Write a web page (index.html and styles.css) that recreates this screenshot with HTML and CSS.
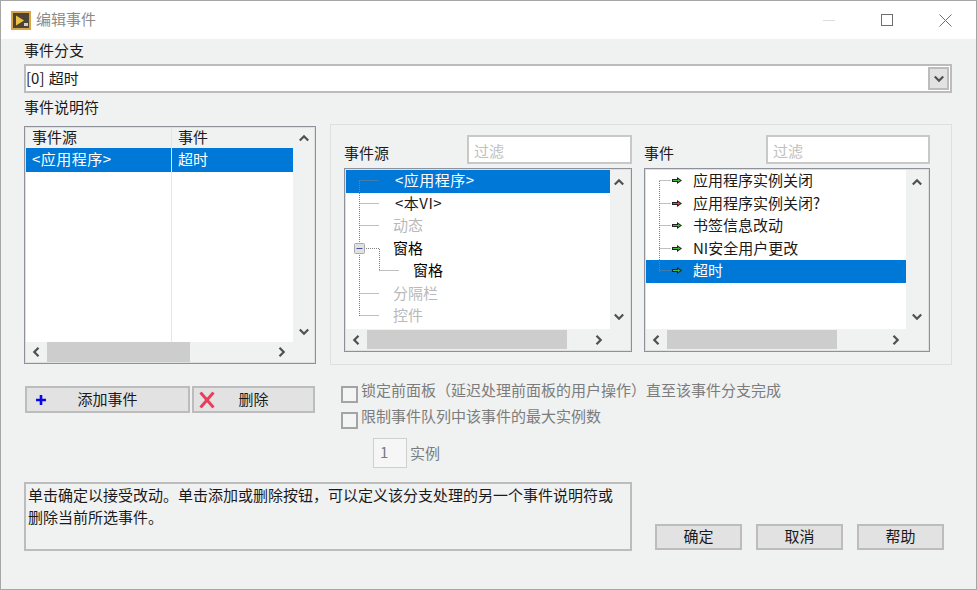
FILE: index.html
```html
<!DOCTYPE html>
<html lang="zh-CN">
<head>
<meta charset="utf-8">
<title>编辑事件</title>
<link rel="stylesheet" href="styles.css">
</head>
<body>
<svg class="defs" width="0" height="0" aria-hidden="true">
  <symbol id="up" viewBox="0 0 10 8"><path d="M.8 6.500 5 2.300l4.200 4.200" fill="none" stroke="#505050" stroke-width="2.200"/></symbol>
  <symbol id="down" viewBox="0 0 10 8"><path d="M.8 1.500 5 5.700l4.200-4.200" fill="none" stroke="#505050" stroke-width="2.200"/></symbol>
  <symbol id="left" viewBox="0 0 8 10"><path d="M6.500.8 2.300 5l4.200 4.200" fill="none" stroke="#505050" stroke-width="2.200"/></symbol>
  <symbol id="right" viewBox="0 0 8 10"><path d="M1.500.8 5.700 5 1.500 9.200" fill="none" stroke="#505050" stroke-width="2.200"/></symbol>
  <symbol id="arrow-green" viewBox="0 0 10 7"><path d="M0 2h5V0l5 3.500L5 7V5H0z" fill="#222"/><path d="M1 3h5V2l2.500 1.500L6 5V4H1z" fill="#3fbf3f"/></symbol>
  <symbol id="arrow-red" viewBox="0 0 10 7"><path d="M0 2h5V0l5 3.500L5 7V5H0z" fill="#222"/><path d="M1 3h5V2l2.500 1.500L6 5V4H1z" fill="#e0483a"/></symbol>
</svg>
<div class="window">
  <header class="titlebar">
    <svg class="app-icon" width="20" height="19" viewBox="0 0 20 19">
      <rect width="20" height="19" fill="#d9a441"/>
      <rect x="2" y="2" width="16" height="15" fill="#4a4436"/>
      <path d="M5 4.500 13 9.500 5 14.500z" fill="#efc243"/>
      <rect x="13" y="12" width="4" height="3" fill="#cfcfcf"/>
    </svg>
    <span class="title-text">编辑事件</span>
    <div class="win-controls">
      <span class="win-min"></span>
      <span class="win-max"></span>
      <svg class="win-close" width="13" height="13" viewBox="0 0 13 13"><path d="M.5.5l12 12M12.500.5l-12 12" stroke="#6e6e6e" fill="none"/></svg>
    </div>
  </header>

  <main class="content">
    <div class="label label-branch">事件分支</div>
    <div class="combo">
      <span class="combo-value">[0] 超时</span>
      <span class="combo-btn"><svg width="12" height="8"><use href="#down"/></svg></span>
    </div>
    <div class="label label-spec">事件说明符</div>

    <div class="row-top">
      <section class="spec-list">
        <div class="spec-body">
          <div class="spec-table">
            <div class="spec-head"><span class="cell-a">事件源</span><span class="cell-b">事件</span></div>
            <div class="spec-row"><span class="cell-a wide">&lt;应用程序&gt;</span><span class="cell-b">超时</span></div>
            <div class="spec-fill"><span class="fill-a"></span></div>
          </div>
          <div class="vbar vbar-spec">
            <svg width="10" height="8"><use href="#up"/></svg>
            <svg width="10" height="8"><use href="#down"/></svg>
          </div>
        </div>
        <div class="hbar">
          <svg class="h-arrow" width="8" height="10"><use href="#left"/></svg>
          <span class="thumb thumb-spec"></span>
          <svg class="h-arrow h-arrow-end" width="8" height="10"><use href="#right"/></svg>
        </div>
      </section>

      <section class="panel">
        <div class="picker picker-source">
          <div class="picker-head">
            <span class="label picker-label">事件源</span>
            <span class="filter">过滤</span>
          </div>
          <div class="listbox">
            <div class="listbox-body">
              <div class="tree">
                <div class="tree-row is-selected indent-1 wide">&lt;应用程序&gt;</div>
                <div class="tree-row indent-1 wide">&lt;本VI&gt;</div>
                <div class="tree-row is-muted indent-0">动态</div>
                <div class="tree-row is-strong indent-0">窗格</div>
                <div class="tree-row is-strong indent-2">窗格</div>
                <div class="tree-row is-muted indent-0">分隔栏</div>
                <div class="tree-row is-muted indent-0">控件</div>
                <svg class="tree-lines" width="80" height="160" viewBox="0 0 80 160">
                  <path d="M13.500 11v135M13.500 10.500h19M13.500 33.500h19M13.500 55.500h19M13.500 123.500h19M13.500 145.500h19M18 78.500h15.500v22M33.500 100.500h19" fill="none" stroke="#808080" stroke-dasharray="1 1"/>
                  <rect x="8.500" y="73.500" width="10" height="10" rx="1" fill="#e2e2e2" stroke="#a8a8a8"/>
                  <path d="M10.500 78.500h6" stroke="#4a50a0"/>
                </svg>
              </div>
              <div class="vbar vbar-source">
                <svg width="10" height="8"><use href="#up"/></svg>
                <svg width="10" height="8"><use href="#down"/></svg>
              </div>
            </div>
            <div class="hbar hbar-list">
              <svg class="h-arrow" width="8" height="10"><use href="#left"/></svg>
              <span class="thumb thumb-source"></span>
              <svg class="h-arrow h-arrow-end" width="8" height="10"><use href="#right"/></svg>
            </div>
          </div>
        </div>

        <div class="picker picker-event">
          <div class="picker-head">
            <span class="label picker-label">事件</span>
            <span class="filter">过滤</span>
          </div>
          <div class="listbox">
            <div class="listbox-body">
              <div class="tree">
                <div class="tree-row event-row"><svg class="ev-arrow" width="10" height="7"><use href="#arrow-green"/></svg>应用程序实例关闭</div>
                <div class="tree-row event-row"><svg class="ev-arrow" width="10" height="7"><use href="#arrow-red"/></svg>应用程序实例关闭?</div>
                <div class="tree-row event-row"><svg class="ev-arrow" width="10" height="7"><use href="#arrow-green"/></svg>书签信息改动</div>
                <div class="tree-row event-row"><svg class="ev-arrow" width="10" height="7"><use href="#arrow-green"/></svg>NI安全用户更改</div>
                <div class="tree-row is-selected event-row"><svg class="ev-arrow" width="10" height="7"><use href="#arrow-green"/></svg>超时</div>
                <svg class="tree-lines" width="30" height="160" viewBox="0 0 30 160">
                  <path d="M13.500 11v90.500M13.500 10.500h11M13.500 33.500h11M13.500 55.500h11M13.500 78.500h11M13.500 100.500h11" fill="none" stroke="#808080" stroke-dasharray="1 1"/>
                </svg>
              </div>
              <div class="vbar vbar-event">
                <svg width="10" height="8"><use href="#up"/></svg>
                <svg width="10" height="8"><use href="#down"/></svg>
              </div>
            </div>
            <div class="hbar hbar-list hbar-event">
              <svg class="h-arrow" width="8" height="10"><use href="#left"/></svg>
              <span class="thumb thumb-event"></span>
              <svg class="h-arrow h-arrow-end" width="8" height="10"><use href="#right"/></svg>
            </div>
          </div>
        </div>
      </section>
    </div>

    <div class="row-mid">
      <div class="add-del">
        <button class="btn btn-add" type="button">
          <svg class="btn-icon" width="12" height="12" viewBox="0 0 12 12"><path d="M6 1v10M1 6h10" stroke="#0808e8" stroke-width="2.600"/></svg>
          <span>添加事件</span>
        </button>
        <button class="btn btn-del" type="button">
          <svg class="btn-icon" width="16" height="17" viewBox="0 0 16 17"><path d="M1.500 1 14.500 16M14.500 1 1.500 16" stroke="#e8405c" stroke-width="3"/></svg>
          <span>删除</span>
        </button>
      </div>
      <div class="options">
        <div class="option"><span class="check"></span><span class="opt-text">锁定前面板（延迟处理前面板的用户操作）直至该事件分支完成</span></div>
        <div class="option option-second"><span class="check"></span><span class="opt-text">限制事件队列中该事件的最大实例数</span></div>
        <div class="instances"><span class="num-box">1</span><span class="opt-text">实例</span></div>
      </div>
    </div>

    <div class="row-bottom">
      <div class="hint">单击确定以接受改动。单击添加或删除按钮，可以定义该分支处理的另一个事件说明符或<br>删除当前所选事件。</div>
      <div class="actions">
        <button class="btn btn-action" type="button">确定</button>
        <button class="btn btn-action" type="button">取消</button>
        <button class="btn btn-action" type="button">帮助</button>
      </div>
    </div>
  </main>
</div>
</body>
</html>
```
FILE: styles.css
```css
* { box-sizing: border-box; }
html, body { margin: 0; padding: 0; background: #f0f0f0; }
body {
  width: 977px;
  height: 590px;
  overflow: hidden;
  font-family: "Noto Sans CJK SC", "Noto Sans", sans-serif;
  font-size: 15px;
  line-height: 20px;
  color: #1a1a1a;
}
.defs { position: absolute; }
svg { display: block; flex: none; }

.window {
  width: 977px;
  height: 590px;
  display: flex;
  flex-direction: column;
  background: #f0f1f1;
  border: 1px solid #a6a6a6;
}

.titlebar {
  height: 38px;
  flex: none;
  display: flex;
  align-items: center;
  background: #fff;
  padding-left: 10px;
}
.title-text { margin-left: 5px; padding-bottom: 2px; color: #8a8a8a; }
.win-controls { margin-left: auto; display: flex; align-items: center; padding-right: 24px; }
.win-min { width: 12px; height: 1px; background: #dcdcdc; }
.win-max { width: 12px; height: 12px; border: 1px solid #6e6e6e; margin-left: 46px; }
.win-close { margin-left: 46px; }

.content { flex: 1; padding: 0 24px 0 23px; display: flex; flex-direction: column; }
.label { display: block; }
.label-branch { height: 25px; padding-top: 1px; }
.label-spec { height: 31px; padding-top: 4px; }

.combo {
  height: 29px;
  display: flex;
  align-items: center;
  background: #fff;
  border: 2px solid #bcbcbc;
  padding: 0 1px 0 0;
}
.combo-value { padding-bottom: 2px; word-spacing: 1px; }
.combo-btn {
  margin-left: auto;
  width: 21px;
  height: 23px;
  display: flex;
  align-items: center;
  justify-content: center;
  background: #e2e2e2;
  border: 2px solid #bcbcbc;
}

.row-top { height: 241px; flex: none; display: flex; align-items: flex-start; }

.spec-list {
  width: 292px;
  height: 238px;
  margin-top: 2px;
  background: #f0f1f1;
  border: 2px solid #dfe0e2;
  outline: 1px solid #8e919a;
  outline-offset: -1px;
  display: flex;
  flex-direction: column;
}
.spec-body { height: 214px; display: flex; }
.spec-table { width: 267px; display: flex; flex-direction: column; background: #fff; }
.spec-head { height: 20px; display: flex; background: #f0f1f1; line-height: 17px; }
.spec-row { height: 24px; display: flex; background: #0078d7; color: #fff; line-height: 21px; }
.cell-a { width: 146px; padding-left: 6px; border-right: 1px solid #e4e4e4; }
.cell-b { padding-left: 6px; }
.spec-fill { flex: 1; }
.fill-a { display: block; width: 146px; height: 100%; border-right: 1px solid #e6e6e6; }
.wide { letter-spacing: .5px; }

.vbar {
  width: 20px;
  flex: none;
  display: flex;
  flex-direction: column;
  align-items: center;
  justify-content: space-between;
  padding: 8px 0;
}
.vbar-spec { width: 21px; padding: 6px 0; }
.vbar-source { padding-right: 2px; }
.vbar-event { width: 22px; }

.hbar {
  flex: 1;
  display: flex;
  align-items: center;
  padding-left: 6px;
}
.h-arrow-end { margin-left: auto; margin-right: 28px; }
.hbar-list .h-arrow-end { margin-right: 27px; }
.hbar-event .h-arrow-end { margin-right: 28px; }
.thumb { display: block; height: 20px; background: #cdcdcd; margin-left: 7px; }
.thumb-spec { width: 143px; }
.thumb-source { width: 200px; height: 19px; }
.thumb-event { width: 170px; height: 19px; }

.panel {
  width: 622px;
  height: 241px;
  margin-left: 14px;
  border: 1px solid #dedfdf;
  display: flex;
  padding: 10px 0 0 13px;
}
.picker { width: 288px; display: flex; flex-direction: column; }
.picker-event { width: 286px; margin-left: 12px; }
.picker-head { height: 33px; display: flex; align-items: flex-start; }
.picker-label { margin-top: 8px; }
.filter {
  height: 29px;
  margin-left: auto;
  background: #fff;
  border: 2px solid #c8c8c8;
  color: #c0c0c0;
  padding: 4px 0 0 5px;
  width: 165px;
}
.picker-event .filter { width: 164px; }

.listbox {
  height: 184px;
  border: 2px solid #dfe0e2;
  outline: 1px solid #8e919a;
  outline-offset: -1px;
  display: flex;
  flex-direction: column;
  background: #f0f1f1;
}
.listbox-body { height: 159px; display: flex; }
.tree { flex: 1; position: relative; background: #fff; }
.tree-lines { position: absolute; left: 0; top: 0; }
.tree-row { height: 22.5px; line-height: 20px; position: relative; }
.tree-row.is-selected { background: #0078d7; color: #fff; }
.tree-row.is-muted { color: #b9b9b9; }
.tree-row.is-strong { color: #000; }
.indent-0 { padding-left: 47px; }
.indent-1 { padding-left: 49px; }
.indent-2 { padding-left: 67px; }
.event-row { padding-left: 47px; }
.ev-arrow { position: absolute; left: 26px; top: 7px; }

.row-mid { height: 117px; flex: none; display: flex; align-items: flex-start; }
.add-del { width: 291px; margin-left: 1px; margin-top: 21px; display: flex; gap: 2px; }
.btn {
  font: inherit;
  color: #1a1a1a;
  background: #e2e2e2;
  border: 2px solid #bcbcbc;
  padding: 0 0 2px;
  height: 27px;
  display: flex;
  align-items: center;
  justify-content: center;
}
.btn-add { width: 165px; position: relative; }
.btn-del { width: 123px; position: relative; }
.btn-icon { position: absolute; top: 50%; transform: translateY(-50%); }
.btn-add .btn-icon { left: 8px; }
.btn-del .btn-icon { left: 5px; }

.options { margin-left: 25px; padding-top: 16px; color: #7c7c7c; }
.option { display: flex; align-items: flex-start; }
.option-second { margin-top: 4px; }
.check {
  width: 17px;
  height: 17px;
  border: 2px solid #a4a4a4;
  background: #f4f4f4;
  margin-top: 5px;
  margin-right: 3px;
}
.opt-text { line-height: 20px; margin-top: -1px; }
.instances { display: flex; align-items: center; margin: 9px 0 0 32px; }
.num-box {
  width: 34px;
  height: 30px;
  border: 1px solid #cfcfcf;
  background: #f6f6f6;
  padding-left: 6px;
  line-height: 25px;
  margin-right: 3px;
}

.row-bottom { display: flex; align-items: flex-start; }
.hint {
  width: 608px;
  height: 69px;
  border: 2px solid #bcbcbc;
  padding: 0 0 0 2px;
  line-height: 22px;
  white-space: nowrap;
}
.actions { display: flex; gap: 14px; margin: 42px 0 0 23px; }
.btn-action { width: 87px; height: 26px; }
```
